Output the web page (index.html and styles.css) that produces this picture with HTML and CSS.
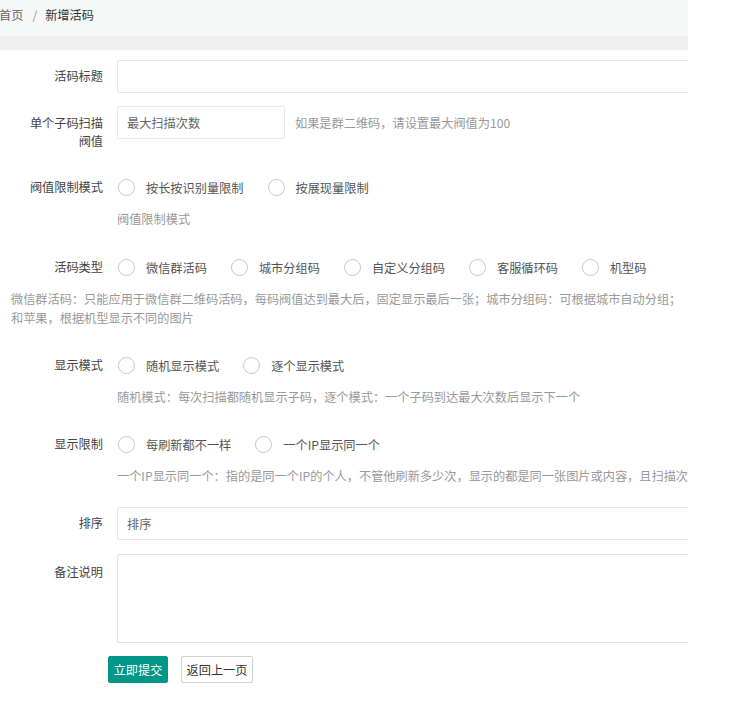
FILE: index.html
```html
<!DOCTYPE html>
<html lang="zh-CN">
<head>
<meta charset="utf-8">
<title>新增活码</title>
<link rel="stylesheet" href="styles.css">
</head>
<body>
<div class="page">
  <div class="crumbs">
    <span class="crumb-home">首页</span><span class="crumb-sep">/</span><span class="crumb-cur">新增活码</span>
  </div>
  <div class="band"></div>

  <form class="form">
    <div class="item">
      <label class="lbl">活码标题</label>
      <div class="field">
        <input class="input input-wide" type="text">
      </div>
    </div>

    <div class="item">
      <label class="lbl lbl-multi">单个子码扫描<br>阀值</label>
      <div class="field field-row">
        <input class="input input-short" type="text" placeholder="最大扫描次数">
        <span class="aside">如果是群二维码，请设置最大阀值为100</span>
      </div>
    </div>

    <div class="item">
      <label class="lbl">阀值限制模式</label>
      <div class="field">
        <div class="radios">
          <span class="radio"><i class="circle"></i>按长按识别量限制</span>
          <span class="radio"><i class="circle"></i>按展现量限制</span>
        </div>
        <div class="hint hint-loose">阀值限制模式</div>
      </div>
    </div>

    <div class="item item-tight">
      <label class="lbl">活码类型</label>
      <div class="field">
        <div class="radios">
          <span class="radio"><i class="circle"></i>微信群活码</span>
          <span class="radio"><i class="circle"></i>城市分组码</span>
          <span class="radio"><i class="circle"></i>自定义分组码</span>
          <span class="radio"><i class="circle"></i>客服循环码</span>
          <span class="radio"><i class="circle"></i>机型码</span>
        </div>
      </div>
    </div>
    <div class="desc">
      <div class="desc-line">微信群活码：只能应用于微信群二维码活码，每码阀值达到最大后，固定显示最后一张；城市分组码：可根据城市自动分组；</div>
      <div class="desc-line">和苹果，根据机型显示不同的图片</div>
    </div>

    <div class="item">
      <label class="lbl">显示模式</label>
      <div class="field">
        <div class="radios">
          <span class="radio"><i class="circle"></i>随机显示模式</span>
          <span class="radio"><i class="circle"></i>逐个显示模式</span>
        </div>
        <div class="hint">随机模式：每次扫描都随机显示子码，逐个模式：一个子码到达最大次数后显示下一个</div>
      </div>
    </div>

    <div class="item">
      <label class="lbl">显示限制</label>
      <div class="field">
        <div class="radios">
          <span class="radio"><i class="circle"></i>每刷新都不一样</span>
          <span class="radio"><i class="circle"></i>一个IP显示同一个</span>
        </div>
        <div class="hint">一个IP显示同一个：指的是同一个IP的个人，不管他刷新多少次，显示的都是同一张图片或内容，且扫描次</div>
      </div>
    </div>

    <div class="item item-sort">
      <label class="lbl">排序</label>
      <div class="field">
        <input class="input input-wide" type="text" placeholder="排序">
      </div>
    </div>

    <div class="item">
      <label class="lbl lbl-top">备注说明</label>
      <div class="field">
        <textarea class="textarea"></textarea>
      </div>
    </div>

    <div class="actions">
      <button type="button" class="btn btn-primary">立即提交</button>
      <button type="button" class="btn btn-plain">返回上一页</button>
    </div>
  </form>
</div>
</body>
</html>
```

FILE: styles.css
```css
* { box-sizing: border-box; }

html, body {
  margin: 0;
  padding: 0;
  background: #ffffff;
}

body {
  font-family: "Noto Sans CJK SC", "Noto Sans", "Liberation Sans", sans-serif;
  font-size: 12.2px;
  color: #444;
}

.page {
  width: 688px;
  height: 701px;
  overflow: hidden;
}

.crumbs {
  height: 36px;
  line-height: 30px;
  background: #f6f7f7;
  white-space: nowrap;
  margin-left: -1px;
}

.crumb-home { color: #666; }
.crumb-sep { color: #999; margin: 0 8px 0 9px; }
.crumb-cur { color: #333; }

.band {
  height: 14px;
  background: #efefef;
}

.form {
  width: 1100px;
  padding-top: 10px;
}

.item {
  display: flex;
  align-items: flex-start;
  margin-bottom: 13px;
}

.item-tight { margin-bottom: 6px; }
.item-sort { margin-bottom: 14px; }

.lbl {
  width: 117px;
  flex: none;
  padding-right: 14px;
  text-align: right;
  line-height: 33px;
  color: #444;
  white-space: nowrap;
}

.lbl-multi {
  line-height: 18px;
  padding-top: 8px;
  padding-bottom: 8px;
}

.lbl-top {
  line-height: 18px;
  padding-top: 9px;
}

.field {
  flex: 1;
  min-width: 0;
}

.field-row {
  display: flex;
  align-items: center;
}

.input {
  display: block;
  height: 33px;
  border: 1px solid #e6e6e6;
  border-radius: 2px;
  padding: 0 9px;
  font: inherit;
  color: #555;
  background: #fff;
  outline: none;
}

.input::placeholder { color: #666; }

.input-wide { width: 700px; }
.input-short { width: 168px; }

.aside {
  margin-left: 10px;
  color: #999;
  white-space: nowrap;
}

.radios {
  display: flex;
  align-items: center;
  height: 33px;
  gap: 23px;
  white-space: nowrap;
}

.radio {
  display: flex;
  align-items: center;
  color: #555;
}

.circle {
  display: block;
  width: 17px;
  height: 17px;
  margin-left: 1px;
  margin-right: 11px;
  border: 1px solid #c6c6c6;
  border-radius: 50%;
  background: #fff;
}

.hint {
  margin-top: 6px;
  padding-bottom: 9px;
  line-height: 18px;
  color: #999;
  white-space: nowrap;
}

.hint-loose { padding-bottom: 10px; }

.desc {
  padding-left: 11px;
  padding-bottom: 8px;
  margin-bottom: 13px;
  line-height: 19px;
  color: #999;
  white-space: nowrap;
}

.textarea {
  display: block;
  width: 700px;
  height: 89px;
  border: 1px solid #e2e2e2;
  border-radius: 2px;
  padding: 6px 9px;
  font: inherit;
  resize: none;
  outline: none;
}

.actions {
  display: flex;
  gap: 13px;
  padding-left: 108px;
}

.btn {
  height: 27px;
  padding: 0;
  font: inherit;
  text-align: center;
  border-radius: 2px;
  cursor: pointer;
}

.btn-primary {
  width: 60px;
  background: #009688;
  border: 1px solid #009688;
  color: #fff;
}

.btn-plain {
  width: 72px;
  background: #fff;
  border: 1px solid #d2d2d2;
  color: #333;
}
```
